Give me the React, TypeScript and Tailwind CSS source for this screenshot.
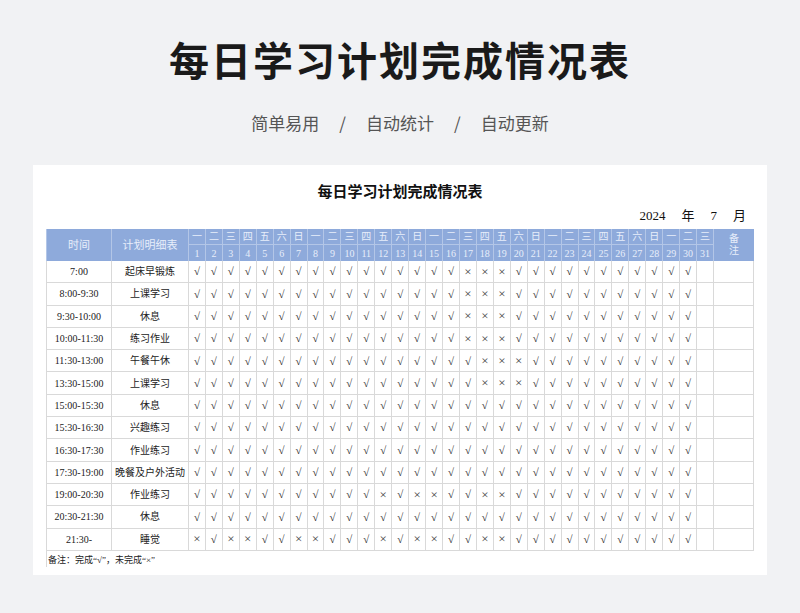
const times = ["7:00","8:00-9:30","9:30-10:00","10:00-11:30","11:30-13:00","13:30-15:00","15:00-15:30","15:30-16:30","16:30-17:30","17:30-19:00","19:00-20:30","20:30-21:30","21:30-"];
const plans = ["起床早锻炼","上课学习","休息","练习作业","午餐午休","上课学习","休息","兴趣练习","作业练习","晚餐及户外活动","作业练习","休息","睡觉"];
const xs: number[][] = [[17,18,19],[17,18,19],[17,18,19],[17,18,19],[18,19,20],[18,19,20],[],[],[],[],[12,14,15,18,19],[],[1,3,4,7,8,12,14,15,18,19]];
const wk = ["一","二","三","四","五","六","日"];
const days = Array.from({length:31},(_,i)=>i+1);
const cols = "grid grid-cols-[65px_77px_repeat(31,minmax(0,1fr))_40px]";
export default function App(){
  return (
    <div className="w-[800px] h-[613px] bg-[#f1f2f4] overflow-hidden" style={{fontFamily:'"Liberation Serif","Noto Sans CJK SC",serif'}}>
      <div className="h-[110px] pt-[33px] text-center text-[40px] font-bold text-[#1a1a1a] leading-[52px] tracking-[2px]" style={{fontFamily:'"Noto Sans CJK SC",sans-serif'}}>每日学习计划完成情况表</div>
      <div className="text-center text-[17px] text-[#555] flex justify-center gap-[20px]" style={{fontFamily:'"Noto Sans CJK SC",sans-serif'}}>
        <span>简单易用</span><span>/</span><span>自动统计</span><span>/</span><span>自动更新</span>
      </div>
      <div className="mx-[33px] mt-[29px] bg-white h-[410px] px-[13px] pt-[15px]">
        <div className="text-center text-[15px] text-[#111] font-bold" style={{fontFamily:'"Noto Sans CJK SC",sans-serif'}}>每日学习计划完成情况表</div>
        <div className="flex justify-end text-[13px] text-[#111] mt-[2px] pr-[8px] gap-[16px] h-[24px] items-center"><span>2024</span><span>年</span><span>7</span><span>月</span></div>
        <div className={`${cols} bg-[#8eaadb] text-[#e8eefa] text-[10px] mt-[1px] border-l border-[#b3c6e7]`}>
          <div className="row-span-2 flex items-center justify-center text-[11px] border-r border-[#b3c6e7]">时间</div>
          <div className="row-span-2 flex items-center justify-center text-[11px] border-r border-[#b3c6e7]">计划明细表</div>
          {days.map(d=><div key={"w"+d} className="h-[16px] flex items-center justify-center border-r border-b border-[#b3c6e7]">{wk[(d-1)%7]}</div>)}
          <div className="row-span-2 flex flex-col items-center justify-center leading-[12px]"><span>备</span><span>注</span></div>
          {days.map(d=><div key={"d"+d} className="h-[16px] flex items-center justify-center border-r border-[#b3c6e7]">{d}</div>)}
        </div>
        {times.map((t,r)=>(
          <div key={r} className={`${cols} h-[22.3px] text-[10px] text-[#222] border-b border-l border-[#d9d9d9]`}>
            <div className="flex items-center justify-center border-r border-[#d9d9d9]">{t}</div>
            <div className="flex items-center justify-center border-r border-[#d9d9d9]">{plans[r]}</div>
            {days.map(d=><div key={d} className={`flex items-center justify-center border-r border-[#d9d9d9] ${xs[r].includes(d)?"text-[13px] text-[#444] font-light":"text-[11px]"}`}>{d===31?"":xs[r].includes(d)?"×":"√"}</div>)}
            <div className="border-r border-[#d9d9d9]"></div>
          </div>
        ))}
        <div className="text-[9px] text-[#222] pt-[3px] border-l border-[#d9d9d9] pl-[1px]">备注：完成“√”，未完成“×”</div>
      </div>
    </div>
  );
}
